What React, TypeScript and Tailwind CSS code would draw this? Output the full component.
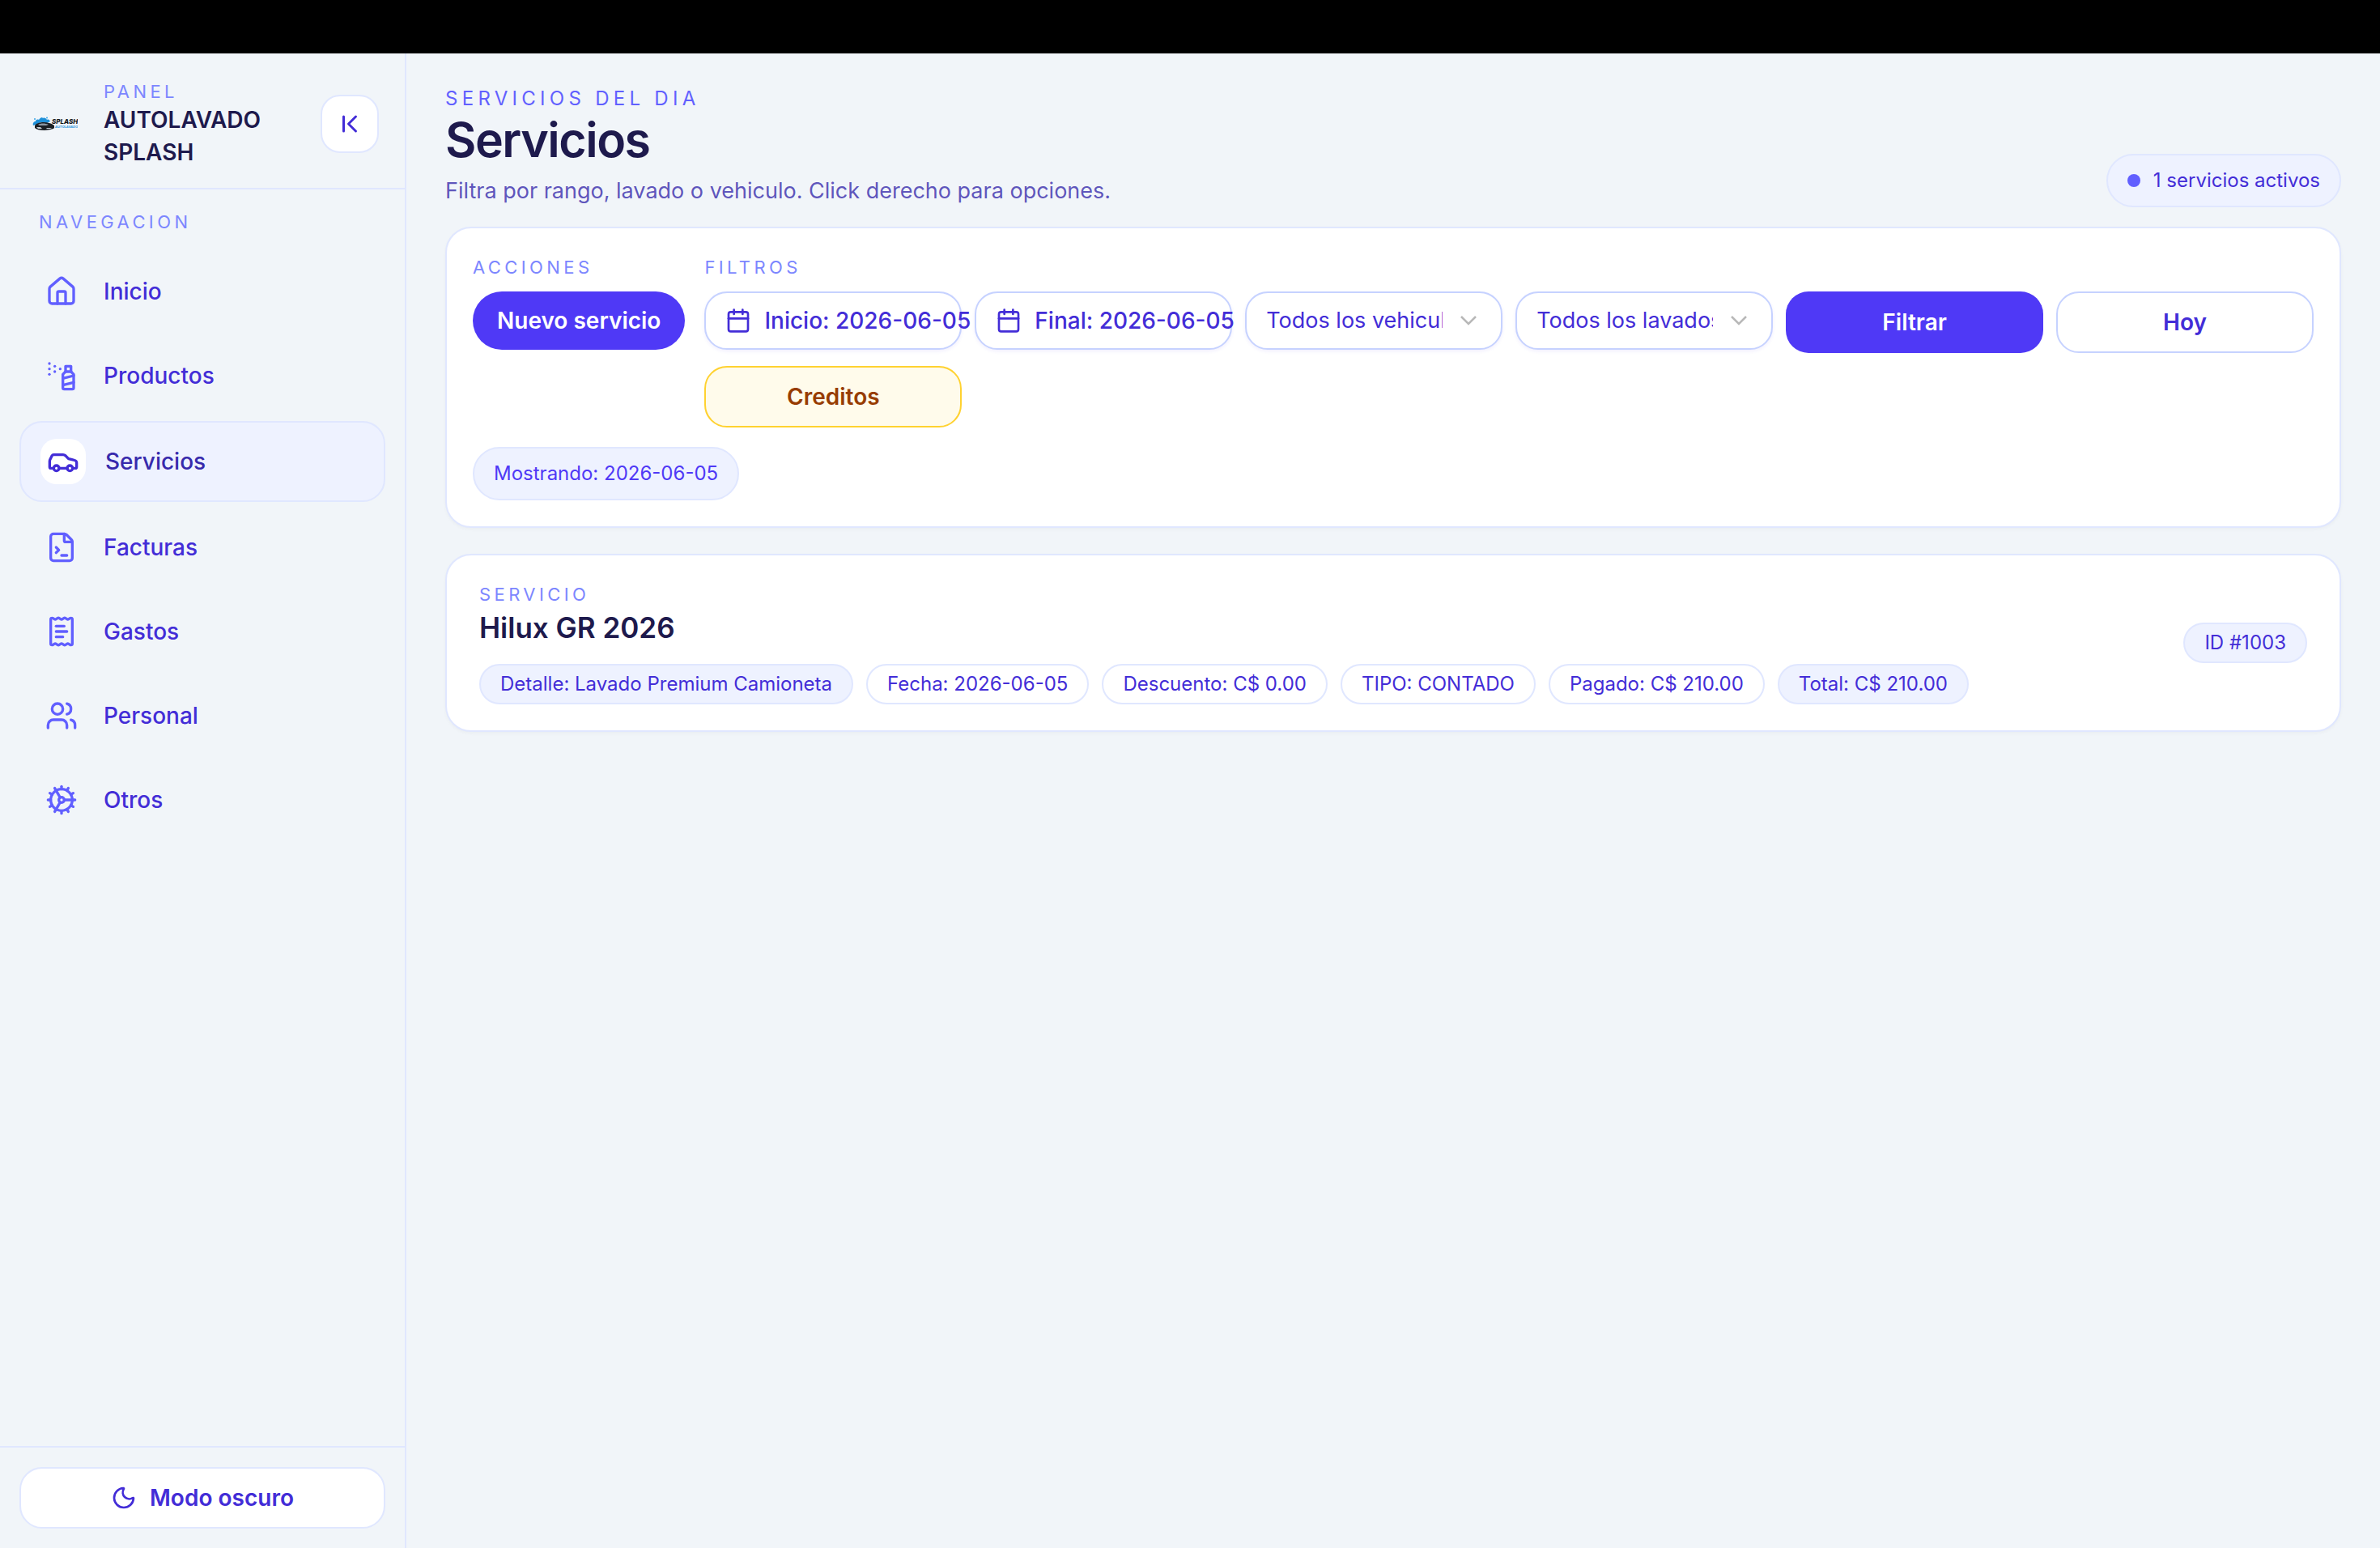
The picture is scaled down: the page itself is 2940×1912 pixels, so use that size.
import type { ReactNode } from "react";
import {
    Calendar,
    Car,
    ChevronFirst,
    Cog,
    FileTerminal,
    House,
    Moon,
    ReceiptText,
    SprayCan,
    Users,
} from "lucide-react";
import { clsx } from "clsx";

const navItems = [
    { label: "Inicio", icon: House },
    { label: "Productos", icon: SprayCan },
    { label: "Servicios", icon: Car, active: true },
    { label: "Facturas", icon: FileTerminal },
    { label: "Gastos", icon: ReceiptText },
    { label: "Personal", icon: Users },
    { label: "Otros", icon: Cog },
];

const details = [
    { text: "Detalle: Lavado Premium Camioneta", filled: true },
    { text: "Fecha: 2026-06-05" },
    { text: "Descuento: C$ 0.00" },
    { text: "TIPO: CONTADO" },
    { text: "Pagado: C$ 210.00" },
    { text: "Total: C$ 210.00", filled: true },
];

const Logo = () => (
    <svg viewBox="0 0 56 18" className="h-[18px] w-14 shrink-0" role="img" aria-label="Splash Autolavado">
        <path
            d="M1 11c-1-3 1-5 3-5 0-2 2-3 4-2 1-2 3-3 4-3l1 1c2-1 4 0 5 2 2-1 3 0 4 2l-4 2-8-1-6 3z"
            fill="#1d8fd8"
        />
        <circle cx="3" cy="3" r="1" fill="#3aa5e6" />
        <circle cx="18" cy="1.5" r="1" fill="#3aa5e6" />
        <path d="M3 11c2-3 6-4 11-4 5 0 9 1 13 4v3c-2 2-6 2-12 3-6 0-10-1-12-3z" fill="#1b1f24" />
        <path d="M7 10c3-2 9-2 13 0l-3 1H9z" fill="#8b97a3" />
        <path d="M5 13h5l2 2H7zM18 14h6l-2 1h-5z" fill="#c5ccd3" />
        <text x="24" y="9" fontFamily="Inter, sans-serif" fontSize="8" fontWeight="800" fontStyle="italic" fill="#15181c">
            SPLASH
        </text>
        <text x="28" y="14" fontFamily="Inter, sans-serif" fontSize="4" fontWeight="700" fontStyle="italic" fill="#2a93dc">
            AUTOLAVADO
        </text>
    </svg>
);

const Overline = ({ children }: { children: ReactNode }) => (
    <p className="text-[22px] leading-8 tracking-[0.2em] text-indigo-400">{children}</p>
);

const Chip = ({ children, filled }: { children: ReactNode; filled?: boolean }) => (
    <span
        className={clsx(
            "rounded-full border-2 border-indigo-100 px-6 py-[7px] text-2xl whitespace-nowrap text-indigo-700",
            filled ? "bg-indigo-50" : "bg-white"
        )}
    >
        {children}
    </span>
);

const DateButton = ({ children }: { children: ReactNode }) => (
    <button
        type="button"
        className="flex h-[72px] min-w-0 items-center gap-4 rounded-[28px] border-2 border-indigo-200 bg-white px-6 text-[28px] font-medium whitespace-nowrap text-indigo-700 shadow-[0_2px_4px_rgba(79,57,246,0.08)]"
    >
        <Calendar className="size-8 shrink-0" />
        {children}
    </button>
);

const SelectField = ({ label, option }: { label: string; option: string }) => (
    <div className="relative min-w-0">
        <select
            aria-label={label}
            className="h-[72px] w-full appearance-none rounded-[28px] border-2 border-indigo-200 bg-white pr-[72px] pl-6 text-[27px] text-indigo-700 shadow-[0_2px_4px_rgba(79,57,246,0.08)]"
        >
            <option>{option}</option>
        </select>
        <svg
            viewBox="0 0 24 24"
            className="pointer-events-none absolute top-6 right-[30px] size-6 text-[#b8b8b8]"
            fill="none"
            stroke="currentColor"
            strokeWidth="2.5"
        >
            <path d="m3 7 9 9 9-9" />
        </svg>
    </div>
);

const Sidebar = () => (
    <aside className="flex w-[502px] shrink-0 flex-col border-r-2 border-indigo-100">
        <div className="flex items-center border-b-2 border-indigo-100 pt-8 pr-8 pb-6 pl-10">
            <Logo />
            <div className="ml-8 flex-1">
                <p className="text-[22px] leading-[30px] tracking-[0.2em] text-indigo-400">PANEL</p>
                <p className="w-52 text-[28px] leading-10 font-semibold text-indigo-950">AUTOLAVADO SPLASH</p>
            </div>
            <button
                type="button"
                aria-label="Contraer panel"
                className="flex size-[72px] items-center justify-center rounded-3xl border-2 border-indigo-100 bg-white text-indigo-700"
            >
                <ChevronFirst className="size-9" />
            </button>
        </div>

        <nav className="flex-1 px-6 pt-6">
            <div className="mb-[22px] px-6">
                <Overline>NAVEGACION</Overline>
            </div>
            <ul className="flex flex-col gap-2">
                {navItems.map(({ label, icon: Icon, active }) => (
                    <li key={label}>
                        <a
                            href="#"
                            aria-current={active ? "page" : undefined}
                            className={clsx(
                                "flex items-center gap-6 rounded-[28px] px-6 py-5 text-[28px] font-medium",
                                active ? "border-2 border-indigo-100 bg-indigo-50 text-indigo-800" : "text-indigo-700"
                            )}
                        >
                            <span
                                className={clsx(
                                    "flex size-14 items-center justify-center rounded-[20px]",
                                    active ? "bg-white text-indigo-700" : "text-indigo-500"
                                )}
                            >
                                <Icon className="size-10" />
                            </span>
                            {label}
                        </a>
                    </li>
                ))}
            </ul>
        </nav>

        <div className="border-t-2 border-indigo-100 p-6">
            <button
                type="button"
                className="flex h-[76px] w-full items-center justify-center gap-4 rounded-[28px] border-2 border-indigo-100 bg-white text-[28px] font-semibold text-indigo-700"
            >
                <Moon className="size-8" />
                Modo oscuro
            </button>
        </div>
    </aside>
);

const Filters = () => (
    <section className="rounded-[32px] border-2 border-indigo-100 bg-white p-8 shadow-[0_2px_4px_rgba(0,0,0,0.03)]">
        <div className="flex gap-6">
            <div className="flex shrink-0 flex-col items-start gap-[14px]">
                <Overline>ACCIONES</Overline>
                <button
                    type="button"
                    className="h-[72px] rounded-full bg-indigo-600 px-[30px] text-[28px] font-semibold text-white"
                >
                    Nuevo servicio
                </button>
            </div>

            <div className="flex min-w-0 flex-1 flex-col gap-[14px]">
                <Overline>FILTROS</Overline>
                <div className="grid grid-cols-6 items-start gap-4">
                    <DateButton>Inicio: 2026-06-05</DateButton>
                    <DateButton>Final: 2026-06-05</DateButton>
                    <SelectField label="Vehiculo" option="Todos los vehiculos" />
                    <SelectField label="Lavado" option="Todos los lavados" />
                    <button
                        type="button"
                        className="h-[76px] rounded-[28px] bg-indigo-600 text-[28px] font-semibold text-white"
                    >
                        Filtrar
                    </button>
                    <button
                        type="button"
                        className="h-[76px] rounded-[28px] border-2 border-indigo-200 bg-white text-[28px] font-semibold text-indigo-700"
                    >
                        Hoy
                    </button>
                    <button
                        type="button"
                        className="h-[76px] rounded-[28px] border-2 border-amber-300 bg-amber-50 text-[28px] font-semibold text-amber-800"
                    >
                        Creditos
                    </button>
                </div>
            </div>
        </div>

        <div className="mt-6 flex">
            <span className="rounded-full border-2 border-indigo-100 bg-indigo-50 px-6 py-[15px] text-2xl text-indigo-600">
                Mostrando: 2026-06-05
            </span>
        </div>
    </section>
);

const ServiceCard = () => (
    <article className="flex items-center justify-between rounded-[32px] border-2 border-indigo-100 bg-white px-10 py-8 shadow-[0_2px_4px_rgba(0,0,0,0.03)]">
        <div>
            <Overline>SERVICIO</Overline>
            <h2 className="text-[35px] leading-[50px] font-semibold text-indigo-950">Hilux GR 2026</h2>
            <div className="mt-5 flex flex-wrap gap-4">
                {details.map(({ text, filled }) => (
                    <Chip key={text} filled={filled}>
                        {text}
                    </Chip>
                ))}
            </div>
        </div>
        <Chip filled>ID #1003</Chip>
    </article>
);

const App = () => {
    return (
        <div className="flex min-h-screen flex-col bg-slate-100 font-[Inter,'Liberation_Sans',sans-serif]">
            <div className="h-[66px] bg-black" />
            <div className="flex flex-1">
                <Sidebar />
                <main className="min-w-0 flex-1 px-12 pt-10">
                    <header className="mb-6 flex items-end justify-between">
                        <div>
                            <p className="text-2xl leading-8 tracking-[0.22em] text-indigo-500">SERVICIOS DEL DIA</p>
                            <h1 className="mb-2 text-[59px] leading-[70px] font-semibold tracking-tight text-indigo-950">
                                Servicios
                            </h1>
                            <p className="text-[27px] leading-10 text-indigo-800/80">
                                Filtra por rango, lavado o vehiculo. Click derecho para opciones.
                            </p>
                        </div>
                        <div className="flex items-center gap-4 rounded-full border-2 border-indigo-100 bg-indigo-50 px-6 py-[15px] text-2xl text-indigo-700">
                            <span className="size-4 rounded-full bg-indigo-500" />
                            1 servicios activos
                        </div>
                    </header>

                    <div className="flex flex-col gap-8">
                        <Filters />
                        <ServiceCard />
                    </div>
                </main>
            </div>
        </div>
    );
};

export default App;
